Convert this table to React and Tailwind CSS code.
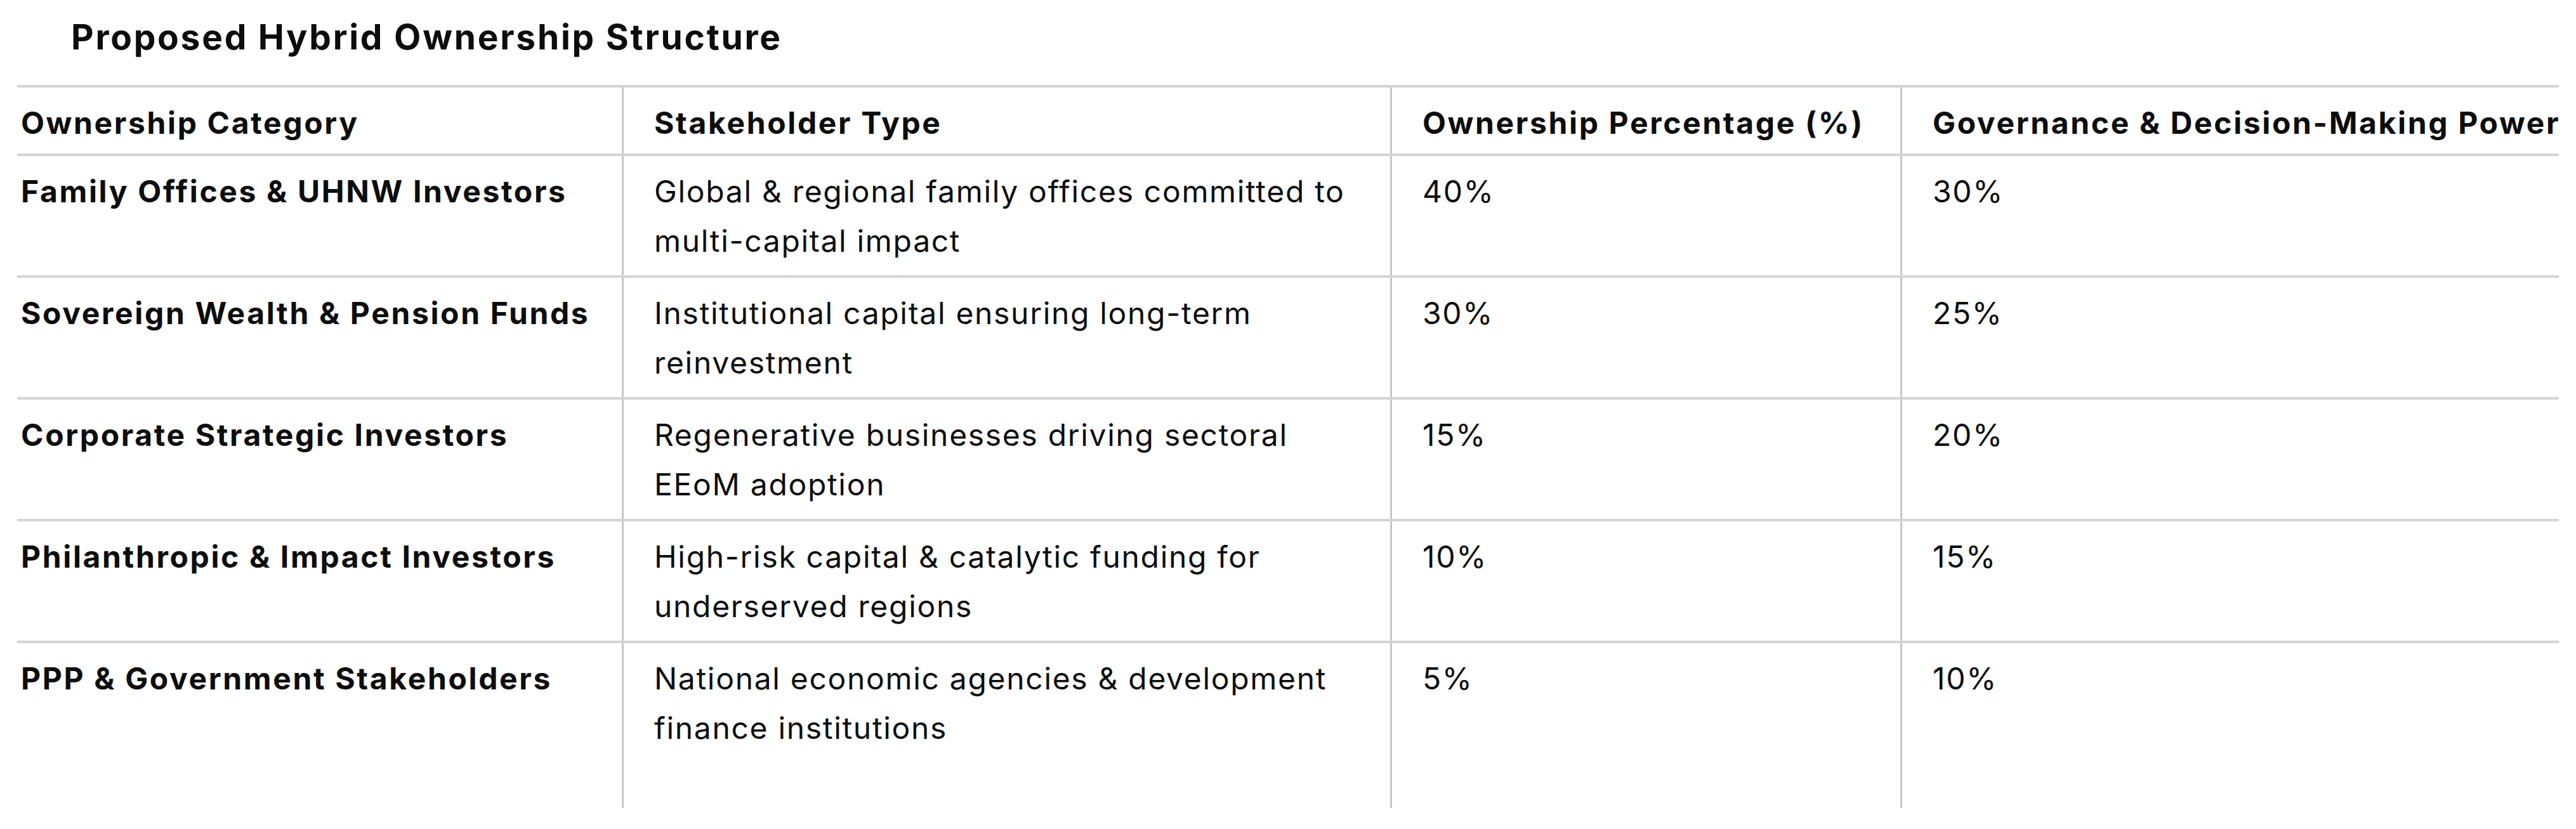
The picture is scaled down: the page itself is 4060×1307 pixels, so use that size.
import React from "react";

const rows = [
  {
    category: "Family Offices & UHNW Investors",
    type: ["Global & regional family offices committed to", "multi-capital impact"],
    ownership: "40%",
    governance: "30%",
  },
  {
    category: "Sovereign Wealth & Pension Funds",
    type: ["Institutional capital ensuring long-term", "reinvestment"],
    ownership: "30%",
    governance: "25%",
  },
  {
    category: "Corporate Strategic Investors",
    type: ["Regenerative businesses driving sectoral", "EEoM adoption"],
    ownership: "15%",
    governance: "20%",
  },
  {
    category: "Philanthropic & Impact Investors",
    type: ["High-risk capital & catalytic funding for", "underserved regions"],
    ownership: "10%",
    governance: "15%",
  },
  {
    category: "PPP & Government Stakeholders",
    type: ["National economic agencies & development", "finance institutions"],
    ownership: "5%",
    governance: "10%",
  },
];

const grid = "grid grid-cols-[953px_1211px_804px_1038px]";

export default function App() {
  return (
    <div className="w-[4060px] h-[1307px] bg-white text-[#0d0d0d] font-['Inter','Liberation_Sans',sans-serif] overflow-hidden">
      <h2 className="pt-[25px] pl-[112px] text-[55px] leading-[66px] font-bold tracking-[0.05em]">
        Proposed Hybrid Ownership Structure
      </h2>

      <div className="ml-[27px] mt-[43px] w-[4006px] border-t-4 border-[#d4d4d4] text-[48px] leading-[78px] tracking-[0.035em]">
        {/* header */}
        <div className={`${grid} border-b-4 border-[#d4d4d4] font-bold tracking-[0.055em]`}>
          <div className="pl-[6px] pt-[17px] pb-[9px]">Ownership Category</div>
          <div className="pl-[48px] pt-[17px] pb-[9px] border-l-[3px] border-[#c6c6c6]">Stakeholder Type</div>
          <div className="pl-[48px] pt-[17px] pb-[9px] border-l-[3px] border-[#c6c6c6]">Ownership Percentage (%)</div>
          <div className="pl-[48px] pt-[17px] pb-[9px] border-l-[3px] border-[#c6c6c6] whitespace-nowrap">
            Governance &amp; Decision-Making Power
          </div>
        </div>

        {rows.map((r, i) => {
          const last = i === rows.length - 1;
          const pad = last ? "pt-[17px] pb-[87px]" : "pt-[17px] pb-[15px]";
          return (
            <div
              key={r.category}
              className={`${grid} ${last ? "" : "border-b-4 border-[#d4d4d4]"}`}
            >
              <div className={`pl-[6px] font-bold tracking-[0.055em] ${pad}`}>{r.category}</div>
              <div className={`pl-[48px] border-l-[3px] border-[#c6c6c6] ${pad}`}>
                {r.type[0]}
                <br />
                {r.type[1]}
              </div>
              <div className={`pl-[48px] border-l-[3px] border-[#c6c6c6] ${pad}`}>{r.ownership}</div>
              <div className={`pl-[48px] border-l-[3px] border-[#c6c6c6] ${pad}`}>{r.governance}</div>
            </div>
          );
        })}
      </div>
    </div>
  );
}
